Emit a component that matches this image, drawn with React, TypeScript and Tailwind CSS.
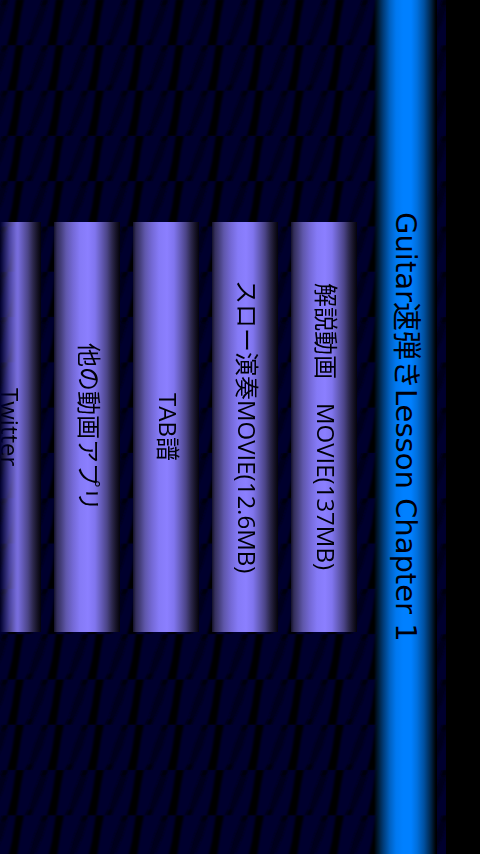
const items = [
  '解説動画　MOVIE(137MB)',
  'スロー演奏MOVIE(12.6MB)',
  'TAB譜',
  '他の動画アプリ',
  'Twitter',
];

// Repeating dark blue tile with slanted black streaks.
function Backdrop() {
  return (
    <svg className="absolute inset-0 h-full w-full" aria-hidden="true">
      <defs>
        <filter id="soft" x="-20%" y="-5%" width="140%" height="110%">
          <feGaussianBlur stdDeviation="1.2" />
        </filter>
        <pattern id="tile" width="40" height="45.3" patternUnits="userSpaceOnUse">
          <rect width="40" height="46" fill="#00002e" />
          <g filter="url(#soft)">
            <path d="M16 -1H24L21 14L16 46H7L12 26Z" fill="#000000" />
            <path d="M3 -1H9L2 22L-9 46H-13L-6 22Z" fill="#03001a" />
            <path d="M43 -1H49L42 22L31 46H27L34 22Z" fill="#03001a" />
            <path d="M2 0H8L5 6H1ZM42 0H48L45 6H41ZM28 40H33L31 46H25Z" fill="#000008" />
          </g>
        </pattern>
      </defs>
      <rect width="100%" height="100%" fill="url(#tile)" />
    </svg>
  );
}

export default function App() {
  return (
    <div className="relative flex h-screen w-full flex-col overflow-hidden bg-black text-[24px] leading-[32px] text-[#000008] [font-family:'Open_Sans','Noto_Sans_CJK_JP',sans-serif] [text-orientation:sideways] [writing-mode:vertical-rl]">
      <Backdrop />
      <div className="relative h-full w-[34px] shrink-0 bg-black" />
      <header className="relative mr-[9px] flex h-full w-[63px] shrink-0 items-center justify-center bg-[linear-gradient(to_right,#000a1400_0px,#001a33_4px,#003a75_9px,#0062c4_16px,#0078f0_22px,#0080ff_29px,#0080ff_37px,#006fdd_43px,#0050a0_50px,#002448_57px,#000000_62px)]">
        <h1 className="whitespace-nowrap text-[29px] [font-family:'DejaVu_Sans','Noto_Sans_CJK_JP',sans-serif]">
          Guitar速弾きLesson Chapter 1
        </h1>
      </header>
      <main className="relative mr-[17px] flex h-full min-w-0 flex-1 flex-col items-center gap-[13px] overflow-hidden [mask-image:linear-gradient(to_right,transparent_0px,black_18px)]">
        {items.map((label) => (
          <button
            key={label}
            type="button"
            className="flex h-[48%] w-[66px] shrink-0 items-center justify-center whitespace-nowrap bg-[linear-gradient(to_right,#14122a_0px,#332e5c_3px,#453f7c_7px,#5f57ab_12px,#7469d6_19px,#857af6_26px,#8b7fff_34px,#8075ee_41px,#665dbb_47px,#4b4487_53px,#2c284d_58px,#171429_62px,#04030a_66px)] pl-[3px]"
          >
            {label}
          </button>
        ))}
      </main>
    </div>
  );
}
